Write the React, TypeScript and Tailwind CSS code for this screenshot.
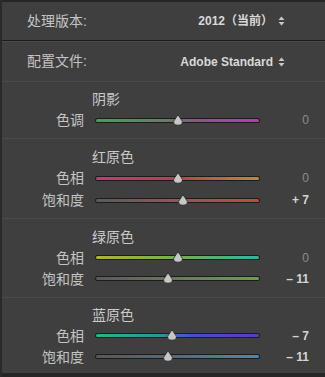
import type { ReactNode } from "react";

type Slider = {
  label: string;
  value: number;
  track: string;
};

type Section = {
  title: string;
  height: string;
  padTop: string;
  rowHeight: string;
  sliders: Slider[];
};

const SECTIONS: Section[] = [
  {
    title: "阴影",
    height: "h-[56px]",
    padTop: "pt-[7px]",
    rowHeight: "h-[22px]",
    sliders: [
      {
        label: "色调",
        value: 0,
        track: "bg-[linear-gradient(to_right,#4f9a5e,#6a7a6a_45%,#7d5d7e_60%,#b040a8)]",
      },
    ],
  },
  {
    title: "红原色",
    height: "h-[79px]",
    padTop: "pt-[8px]",
    rowHeight: "h-[22px]",
    sliders: [
      {
        label: "色相",
        value: 0,
        track: "bg-[linear-gradient(to_right,#c03c78,#b84050_50%,#c08a38)]",
      },
      {
        label: "饱和度",
        value: 7,
        track: "bg-[linear-gradient(to_right,#5a5a5a,#8a5a5a_50%,#c04848)]",
      },
    ],
  },
  {
    title: "绿原色",
    height: "h-[78px]",
    padTop: "pt-[8px]",
    rowHeight: "h-[21px]",
    sliders: [
      {
        label: "色相",
        value: 0,
        track: "bg-[linear-gradient(to_right,#b0b040,#70b050_50%,#38b0a0)]",
      },
      {
        label: "饱和度",
        value: -11,
        track: "bg-[linear-gradient(to_right,#5a5a5a,#6a7a60_50%,#6aa050)]",
      },
    ],
  },
  {
    title: "蓝原色",
    height: "h-[75px]",
    padTop: "pt-[7px]",
    rowHeight: "h-[21px]",
    sliders: [
      {
        label: "色相",
        value: -7,
        track: "bg-[linear-gradient(to_right,#30b088,#3090a0_40%,#4050c8_60%,#6038c8)]",
      },
      {
        label: "饱和度",
        value: -11,
        track: "bg-[linear-gradient(to_right,#585858,#5a6a78_50%,#4a88b8)]",
      },
    ],
  },
];

const formatValue = (value: number) => {
  if (value > 0) return `+ ${value}`;
  if (value < 0) return `– ${Math.abs(value)}`;
  return "0";
};

const UpDown = () => (
  <svg width="7" height="10" viewBox="0 0 7 10" className="ml-[5px]">
    <path d="M3.5 0.5 L6.5 4 L0.5 4 Z" fill="#c8c8c8" />
    <path d="M3.5 9.5 L6.5 6 L0.5 6 Z" fill="#c8c8c8" />
  </svg>
);

const Thumb = () => (
  <svg width="11" height="12" viewBox="0 0 11 12">
    <path
      d="M5.5 0.8 L9.8 7.2 Q10.4 11.2 5.5 11.2 Q0.6 11.2 1.2 7.2 Z"
      fill="#c6c6c6"
      stroke="#2a2a2a"
      strokeWidth="0.8"
    />
  </svg>
);

const TopRow = ({ label, children }: { label: string; children: ReactNode }) => (
  <div className="flex flex-1 items-center justify-between pl-[25px] pr-[40px]">
    <span className="text-[14px] text-[#c4c4c4]">{label}</span>
    <div className="flex items-center text-[12px] font-bold text-[#d8d8d8]">
      {children}
      <UpDown />
    </div>
  </div>
);

const SliderRow = ({ slider, rowHeight }: { slider: Slider; rowHeight: string }) => {
  const position = 50 + slider.value / 2;
  return (
    <div className={`flex items-center ${rowHeight}`}>
      <span className="w-[82px] text-right text-[14px] leading-none text-[#c4c4c4]">
        {slider.label}
      </span>
      <div className="relative ml-[11px] h-[5px] w-[165px] rounded-full bg-[#1c1c1c] p-[1px]">
        <div className={`h-full w-full rounded-full ${slider.track}`} />
        <div
          className="absolute bottom-[-3px] -translate-x-1/2"
          style={{ left: `${position}%` }}
        >
          <Thumb />
        </div>
      </div>
      <span
        className={`w-[49px] text-right text-[12px] ${
          slider.value === 0 ? "text-[#8c8c8c]" : "font-bold text-[#d4d4d4]"
        }`}
      >
        {formatValue(slider.value)}
      </span>
    </div>
  );
};

export default function App() {
  return (
    <div className="flex h-[377px] w-[325px] flex-col border-l-2 border-[#2a2a2a] bg-[#3f3f3f] font-['Liberation_Sans','Noto_Sans_CJK_SC',sans-serif]">
      <div className="h-[2px] bg-[#262626]" />
      <div className="flex h-[38px]">
        <TopRow label="处理版本:">2012（当前）</TopRow>
      </div>
      <div className="h-[1px] bg-[#1b1b1b]" />
      <div className="h-[1px] bg-[#4a4a4a]" />
      <div className="flex h-[39px]">
        <TopRow label="配置文件:">Adobe Standard</TopRow>
      </div>
      {SECTIONS.map((section) => (
        <div key={section.title}>
          <div className="h-[1px] bg-[#4b4b4b]" />
          <div className={`flex flex-col ${section.height} ${section.padTop}`}>
            <div className="flex h-5 items-center pl-[90px] text-[14px] text-[#cacaca]">
              {section.title}
            </div>
            {section.sliders.map((slider) => (
              <SliderRow
                key={slider.label}
                slider={slider}
                rowHeight={section.rowHeight}
              />
            ))}
          </div>
        </div>
      ))}
      <div className="h-[4px] bg-[#262626]" />
    </div>
  );
}
